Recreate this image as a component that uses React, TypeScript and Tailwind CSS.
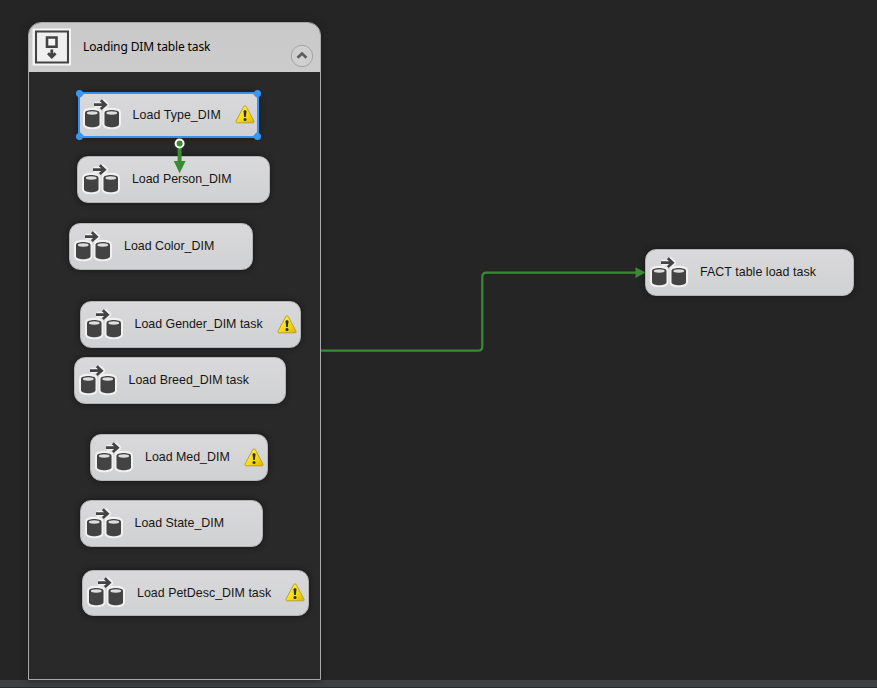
import React from "react";

type Task = { label: string; box: string; text: string; warning?: boolean; selected?: boolean };

const sans = "font-['Liberation_Sans',Arial,sans-serif] text-[12.4px]";
const noto = "font-['Noto_Sans',sans-serif] text-[12px]";

const tasks: Task[] = [
  { label: "Load Type_DIM", box: "left-[77.5px] top-[91.5px] w-[181.5px]", text: `${sans} tracking-[0.08px]`, warning: true, selected: true },
  { label: "Load Person_DIM", box: "left-[77px] top-[156px] w-[193px]", text: `${sans} tracking-[-0.02px]` },
  { label: "Load Color_DIM", box: "left-[69px] top-[223px] w-[184px]", text: `${sans} tracking-[0px]` },
  { label: "Load Gender_DIM task", box: "left-[79.5px] top-[301px] w-[221px]", text: `${sans} tracking-[0px]`, warning: true },
  { label: "Load Breed_DIM task", box: "left-[73.5px] top-[357px] w-[212.5px]", text: `${sans} tracking-[0.03px]` },
  { label: "Load Med_DIM", box: "left-[90px] top-[434px] w-[178px]", text: `${sans} tracking-[0px]`, warning: true },
  { label: "Load State_DIM", box: "left-[79.5px] top-[500px] w-[183px]", text: `${sans} tracking-[0px]` },
  { label: "Load PetDesc_DIM task", box: "left-[82px] top-[569.5px] w-[227px]", text: `${sans} tracking-[0.03px]`, warning: true },
  { label: "FACT table load task", box: "left-[645px] top-[249px] w-[209px]", text: `${sans} tracking-[0.06px]` },
];

function Cylinder({ x }: { x: number }) {
  return (
    <g transform={`translate(${x} 10.7)`}>
      <path d="M0 3C0-.7 14.5-.7 14.5 3V14.5C14.5 18.5 0 18.5 0 14.5Z" fill="#434343" />
      <ellipse cx="7.25" cy="3.3" rx="5.4" ry="1.7" fill="#dedede" />
    </g>
  );
}

function DataFlowIcon() {
  return (
    <svg width="38" height="32" viewBox="0 0 38 32" className="mt-[1px] shrink-0 overflow-visible">
      <g fill="#f1f1f1" stroke="#f1f1f1" strokeWidth="4" strokeLinejoin="round">
        <path d="M2 13.7C2 9.7 16.5 9.7 16.5 13.7V25.2C16.5 29.2 2 29.2 2 25.2Z" />
        <path d="M21.5 13.7C21.5 9.7 36 9.7 36 13.7V25.2C36 29.2 21.5 29.2 21.5 25.2Z" />
        <path d="M11.5 5.7H23M19 2L23 5.7L19 9.5" fill="none" strokeWidth="6" />
      </g>
      <path d="M11 5.7H23M17.8 1.3L22.6 5.7L17.8 10.1" fill="none" stroke="#434343" strokeWidth="2.7" />
      <Cylinder x={2} />
      <Cylinder x={21.5} />
    </svg>
  );
}

function WarningIcon() {
  return (
    <svg width="20" height="19" viewBox="0 0 20 19" className="ml-auto shrink-0">
      <defs>
        <linearGradient id="warn" x1="0" y1="0" x2="1" y2="1">
          <stop offset="0" stopColor="#fff56a" />
          <stop offset=".55" stopColor="#f5df0c" />
          <stop offset="1" stopColor="#d8b400" />
        </linearGradient>
      </defs>
      <path d="M10 .8C10.8 .8 11.1 1.3 11.5 2.1L18.9 16C19.4 17.2 19 17.8 18 17.8H2C1 17.8.6 17.2 1.1 16L8.5 2.1C8.9 1.3 9.2 .8 10 .8Z" fill="url(#warn)" stroke="#b8982a" strokeWidth=".9" />
      <path d="M8.5 6.5C8.5 4.7 11.5 4.7 11.5 6.5L10.8 12H9.2Z" fill="#302c28" />
      <circle cx="10" cy="14.4" r="1.5" fill="#302c28" />
    </svg>
  );
}

function TaskNode({ task }: { task: Task }) {
  return (
    <div
      className={`absolute flex h-[46.5px] items-center rounded-[11px] border border-[#b4b4b5] bg-linear-to-b from-[#d9d9db] to-[#d0d1d2] pr-[3px] pl-[4px] shadow-[0_0_5px_1px_#1b1b1b] ${task.box}`}
    >
      <DataFlowIcon />
      <span className={`ml-[12px] whitespace-nowrap leading-[16px] text-[#161616] ${task.text}`}>{task.label}</span>
      {task.warning && <WarningIcon />}
      {task.selected && (
        <div className="absolute -inset-[1px] border-2 border-[#3294f0]">
          <i className="absolute -top-[4px] -left-[4px] size-[7px] rounded-full bg-[#3399ff]" />
          <i className="absolute -top-[4px] -right-[4px] size-[7px] rounded-full bg-[#3399ff]" />
          <i className="absolute -bottom-[4px] -left-[4px] size-[7px] rounded-full bg-[#3399ff]" />
          <i className="absolute -right-[4px] -bottom-[4px] size-[7px] rounded-full bg-[#3399ff]" />
        </div>
      )}
    </div>
  );
}

function Container() {
  return (
    <section className="absolute top-[22px] left-[28px] flex h-[658px] w-[293px] flex-col overflow-hidden rounded-t-[13px] border border-[#a9a9a9] bg-[#292929] shadow-[0_0_6px_#1c1c1c]">
      <header className="flex h-[49px] shrink-0 bg-linear-to-b from-[#c9c9c9] to-[#cccccc]">
        <svg width="40" height="38" viewBox="0 0 40 38" className="mt-[5px] ml-[3px]">
          <path d="M.5 .5H39V37.5H.5Z" fill="#f5f5f5" />
          <path d="M4 3.5H36V34.5H4Z" fill="#efeff0" stroke="#434343" strokeWidth="2.1" />
          <path d="M15 9.5H24.5V18.7H15Z" fill="#f7f7f7" stroke="#434343" strokeWidth="2.6" />
          <path d="M19.8 21.5V29M16 25.2L19.8 29L23.6 25.2" fill="none" stroke="#434343" strokeWidth="2.8" />
        </svg>
        <h1 className={`mt-[16px] ml-[11px] whitespace-nowrap leading-[16px] tracking-[-0.13px] text-black ${noto}`}>Loading DIM table task</h1>
        <svg width="24" height="24" viewBox="0 0 24 24" className="mt-[21px] mr-[6px] ml-auto">
          <circle cx="12" cy="12" r="10.7" fill="#cfcfcf" stroke="#a4a4a4" />
          <path d="M7.5 13.8L12 9.5L16.5 13.8" fill="none" stroke="#5d5d5d" strokeWidth="2.7" />
        </svg>
      </header>
    </section>
  );
}

export default function App() {
  return (
    <div className="flex h-[688px] w-[877px] flex-col overflow-hidden bg-[#252525]">
      <main className="relative h-[680px]">
        <Container />
        {tasks.map((task) => (
          <TaskNode key={task.label} task={task} />
        ))}
        <svg width="877" height="680" viewBox="0 0 877 680" className="pointer-events-none absolute inset-0">
          <path d="M321 350.7H478Q482.3 350.7 482.3 346.5V277Q482.3 272.6 486.5 272.6H637" fill="none" stroke="#388a34" strokeWidth="2.2" />
          <path d="M635.5 267.3L645.5 272.6L635.5 278Z" fill="#388a34" />
          <path d="M179.6 145V163" stroke="#388a34" strokeWidth="4" />
          <path d="M173.8 161H185.6L179.6 173.3Z" fill="#388a34" />
          <circle cx="179.6" cy="143.5" r="4" fill="#388a34" stroke="white" strokeWidth="2" />
        </svg>
      </main>
      <footer className="h-[8px] border-b border-[#28282a] bg-[#3d4144]" />
    </div>
  );
}
